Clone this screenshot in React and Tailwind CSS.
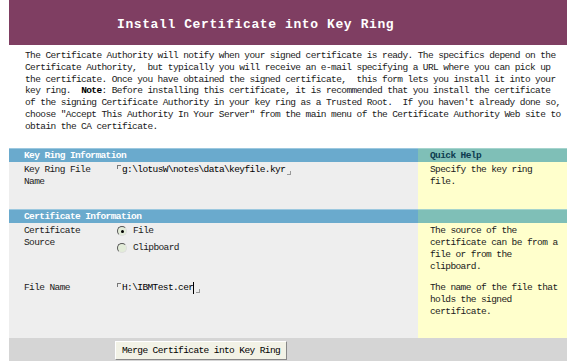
import React from 'react'

const mono = { fontFamily: '"Liberation Mono", "DejaVu Sans Mono", monospace' }

const intro = [
  'The Certificate Authority will notify when your signed certificate is ready. The specifics depend on the',
  'Certificate Authority,  but typically you will receive an e-mail specifying a URL where you can pick up',
  'the certificate. Once you have obtained the signed certificate,  this form lets you install it into your',
  null,
  "of the signing Certificate Authority in your key ring as a Trusted Root.  If you haven't already done so,",
  'choose "Accept This Authority In Your Server" from the main menu of the Certificate Authority Web site to',
  'obtain the CA certificate.',
]

function Field({ value, cursor }) {
  return (
    <div className="flex items-start">
      <span className="mt-[1px] mr-[1px] h-[4px] w-[4px] border-l border-t border-[#777]"></span>
      <span className="text-black">{value}</span>
      {cursor ? <span className="h-[12px] w-[1px] bg-black"></span> : null}
      <span className="mt-[7px] ml-[2px] h-[4px] w-[4px] border-r border-b border-[#999]"></span>
    </div>
  )
}

function Radio({ checked, label }) {
  return (
    <div className="flex items-center h-[12px]">
      <span className="relative mr-[6px] h-[10px] w-[10px] rounded-full border border-t-[#555] border-l-[#555] border-r-[#ddd] border-b-[#ddd] bg-[#e3ecd9]">
        {checked ? <span className="absolute left-[2.5px] top-[2.5px] h-[3px] w-[3px] rounded-full bg-black"></span> : null}
      </span>
      <span>{label}</span>
    </div>
  )
}

export default function App() {
  return (
    <div className="w-[572px] h-[361px] bg-white overflow-hidden text-[9.5px] leading-[12px] tracking-[-0.6px] text-[#1a1a1a]" style={mono}>
      <div className="ml-[9px] w-[558px]">
        <div className="h-[45px] bg-[#7f3e62] flex items-center pl-[108px] pt-[5px]">
          <h1 className="text-white font-bold text-[13px] tracking-[0.6px]" style={mono}>Install Certificate into Key Ring</h1>
        </div>

        <div className="pt-[5px] pl-[16px] h-[103px] whitespace-pre leading-[11.8px]">
          {intro.map((line, i) =>
            line === null ? (
              <div key={i}>key ring.  <b className="font-bold text-black">Note</b>: Before installing this certificate, it is recommended that you install the certificate</div>
            ) : (
              <div key={i}>{line}</div>
            )
          )}
        </div>

        <div className="grid grid-cols-[108px_301px_149px]">
          {/* key ring */}
          <div className="col-span-2 h-[14px] bg-[#6aaacd] border-t border-[#9cc8df] pl-[15px] text-white font-bold leading-[13px]">Key Ring Information</div>
          <div className="h-[14px] bg-[#7fbfb7] border-t border-[#a5d4cd] pl-[12px] text-[#0d3b4f] font-bold leading-[13px]">Quick Help</div>

          <div className="h-[47px] bg-[#eeeeee] pl-[15px] pt-[2px]">Key Ring File<br />Name</div>
          <div className="bg-[#eeeeee] pt-[2px]"><Field value="g:\lotusW\notes\data\keyfile.kyr" /></div>
          <div className="bg-[#ffffcc] pl-[12px] pt-[2px]">Specify the key ring<br />file.</div>

          {/* cert info */}
          <div className="col-span-2 h-[14px] bg-[#6aaacd] border-t border-[#9cc8df] pl-[15px] text-white font-bold leading-[13px]">Certificate Information</div>
          <div className="h-[14px] bg-[#7fbfb7] border-t border-[#a5d4cd]"></div>

          <div className="h-[57px] bg-[#eeeeee] pl-[15px] pt-[2px]">Certificate<br />Source</div>
          <div className="bg-[#eeeeee] pt-[2px] flex flex-col gap-[5px]">
            <Radio checked label="File" />
            <Radio label="Clipboard" />
          </div>
          <div className="bg-[#ffffcc] pl-[12px] pt-[2px]">The source of the<br />certificate can be from a<br />file or from the<br />clipboard.</div>

          <div className="h-[58px] bg-[#eeeeee] pl-[15px] pt-[2px]">File Name</div>
          <div className="bg-[#eeeeee] pt-[2px]"><Field value="H:\IBMTest.cer" cursor /></div>
          <div className="bg-[#ffffcc] pl-[12px] pt-[2px]">The name of the file that<br />holds the signed<br />certificate.</div>

          <div className="col-span-3 h-[23px] bg-[#d5d5d5] pl-[106px] pt-[3px]">
            <button className="h-[19px] px-[6px] bg-[#f2f2e6] border border-t-white border-l-white border-r-[#888] border-b-[#888] text-black text-[9.5px] leading-[12px] tracking-[-0.6px]" style={mono}>Merge Certificate into Key Ring</button>
          </div>
        </div>
      </div>
    </div>
  )
}
